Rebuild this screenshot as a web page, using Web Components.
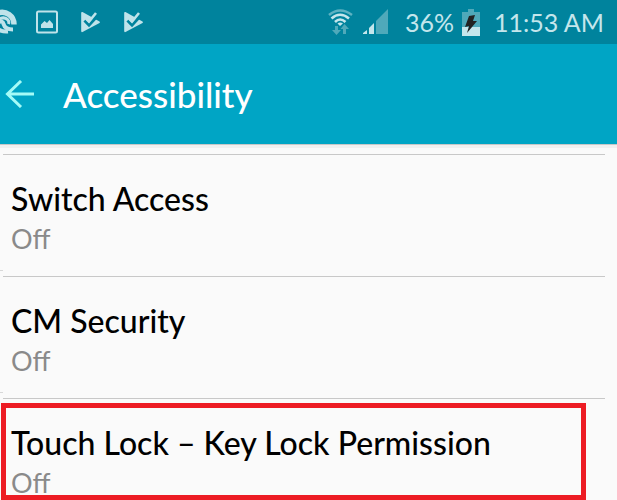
<!DOCTYPE html>
<html lang="en">
<head>
<meta charset="UTF-8">
<meta name="viewport" content="width=device-width, initial-scale=1">
<title>Accessibility</title>
<style>
  body {
    margin: 0;
    background: #fafafa;
    font-family: Lato, "Open Sans", sans-serif;
    overflow: hidden;
  }
</style>
</head>
<body>
<status-bar battery="36%" time="11:53 AM"></status-bar>
<app-header>Accessibility</app-header>
<settings-list>
  <settings-item state="Off">Switch Access</settings-item>
  <settings-item state="Off">CM Security</settings-item>
  <settings-item state="Off" marked>Touch Lock – Key Lock Permission</settings-item>
</settings-list>

<script>
class StatusBar extends HTMLElement {
  connectedCallback() {
    const playCheck = `
      <svg width="20" height="22" viewBox="0 0 20 22">
        <path d="M1.500 1L18.500 10.500Q19.500 11.200 18.500 12L1.500 21Q.2 21.500 .2 20V2Q.2 .5 1.500 1Z" fill="#bfe3ea"/>
        <path d="M9 8.500L13 3.500L18 0L20 2V9L15.500 8Z" fill="#00839d"/>
        <path d="M3.500 9.500L8 14L15.500 6" fill="none" stroke="#00839d" stroke-width="3"/>
        <path d="M5 7.500L8 10.500L15 2" fill="none" stroke="#bfe3ea" stroke-width="2.600"/>
      </svg>`;
    this.attachShadow({ mode: 'open' });
    this.shadowRoot.innerHTML = `
      <style>
        :host {
          display: flex;
          justify-content: space-between;
          height: 44px;
          background: #00839d;
          color: #c4e6ec;
          font-size: 25px;
          line-height: 44px;
          white-space: nowrap;
        }
        .group {
          display: flex;
          align-items: center;
        }
        .left {
          gap: 23px;
        }
        .left svg:first-child {
          margin-right: -4px;
        }
        .right {
          padding-right: 13px;
        }
        .wifi {
          margin-right: 10px;
        }
        .signal {
          margin-right: 17px;
        }
        .battery {
          margin: 0 14px 0 8px;
        }
        svg {
          display: block;
          flex: none;
        }
      </style>
      <div class="group left">
        <svg width="17" height="26" viewBox="0 0 17 26">
          <g fill="none" stroke="#bfe3ea">
            <path d="M-2 4Q4 2 9 5.500Q14 9 14 15.500" stroke-width="5.500"/>
            <path d="M-1 10Q4 7.500 7.500 10.500Q9.500 12.500 8.500 15" stroke-width="3"/>
            <path d="M-2 13.500Q3 11 3.500 15Q5 20.500 13 20.500" stroke-width="4"/>
            <path d="M-2 20Q2 23 8 22.500" stroke-width="4"/>
          </g>
        </svg>
        <svg width="22" height="24" viewBox="0 0 22 24">
          <rect x="1" y="1.500" width="20" height="21" rx="1.500" fill="none" stroke="#bfe3ea" stroke-width="2"/>
          <path d="M5 18V14.500L8.500 11L11 13L13.500 10L17 14V18Z" fill="#bfe3ea"/>
        </svg>
        ${playCheck}
        ${playCheck}
      </div>
      <div class="group right">
        <svg class="wifi" width="25" height="26" viewBox="0 0 25 26">
          <g fill="none" stroke="#c4e6ec" stroke-width="2.600">
            <path d="M1 6Q12-3 24 6" stroke="#5db2c2"/>
            <path d="M3.500 9.500Q12 2 21 9.500"/>
            <path d="M7 13Q12 8 17.500 13"/>
          </g>
          <path d="M9.500 14.500Q12 12.500 15 14.500L12 17Z" fill="#c4e6ec"/>
          <path d="M7 17H10V21H13L8.500 26L4 21H7ZM15 25V20H12.500L16.500 15L21 20H18V25Z" fill="#4fa9ba"/>
        </svg>
        <svg class="signal" width="25" height="26" viewBox="0 0 25 26">
          <path d="M13 12L25 0V25H13Z" fill="#4fa9ba"/>
          <path d="M0 25V24L4 21V25ZM6 25V19L7 18H9V25Z" fill="#c4e6ec"/>
          <path d="M7 25V18L11 14V25Z" fill="#c4e6ec"/>
          <path d="M5.500 19V25" stroke="#00839d"/>
        </svg>
        <span>${this.getAttribute('battery')}</span>
        <svg class="battery" width="18" height="27" viewBox="0 0 18 27">
          <path d="M0 3H6V0H12V3H18V27H0Z" fill="#4fa9ba"/>
          <path d="M0 18H18V27H0Z" fill="#c4e6ec"/>
          <path d="M7 7L13 6L11 12L15 12L5 24L7 17L3 18Z" fill="#222"/>
        </svg>
        <span>${this.getAttribute('time')}</span>
      </div>
    `;
  }
}
customElements.define('status-bar', StatusBar);

class AppHeader extends HTMLElement {
  connectedCallback() {
    this.attachShadow({ mode: 'open' });
    this.shadowRoot.innerHTML = `
      <style>
        :host {
          display: flex;
          align-items: center;
          gap: 28px;
          height: 100px;
          padding-left: 5px;
          background: #00a5c5;
          box-shadow: 0 1px #c8c8c8, 0 4px #f0f0f0;
        }
        button {
          padding: 0;
          border: 0;
          background: none;
          color: #a4fbf7;
        }
        svg {
          display: block;
        }
        h1 {
          margin: 0;
          color: white;
          font-size: 35px;
          font-weight: 500;
          line-height: 40px;
        }
      </style>
      <button aria-label="Back">
        <svg width="30" height="28" viewBox="0 0 30 28" fill="none" stroke="currentColor" stroke-width="3">
          <path d="M16 1L2.500 14L16 27M2.500 14H29"/>
        </svg>
      </button>
      <h1><slot></slot></h1>
    `;
  }
}
customElements.define('app-header', AppHeader);

class SettingsList extends HTMLElement {
  connectedCallback() {
    this.attachShadow({ mode: 'open' });
    this.shadowRoot.innerHTML = `
      <style>
        :host {
          display: block;
          padding: 10px 12px 0 3px;
        }
      </style>
      <slot></slot>
    `;
  }
}
customElements.define('settings-list', SettingsList);

class SettingsItem extends HTMLElement {
  connectedCallback() {
    this.attachShadow({ mode: 'open' });
    this.shadowRoot.innerHTML = `
      <style>
        :host {
          display: block;
          position: relative;
          border-top: 1px solid #c8c8c8;
        }
        button {
          display: block;
          width: 100%;
          padding: 24px 8px 17px;
          border: 0;
          background: none;
          font: inherit;
          text-align: left;
        }
        .title,
        .state {
          display: block;
          line-height: 40px;
        }
        .title {
          color: #000;
          font-size: 32px;
          font-weight: 500;
        }
        .state {
          color: #8a8a8a;
          font-size: 27px;
        }
        /* stub of the divider in the left gutter */
        :host(:not([marked]))::after {
          content: "";
          position: absolute;
          left: -3px;
          bottom: 5px;
          width: 3px;
          height: 1px;
          background: #d8d8d8;
        }
        :host([marked]) button {
          padding-bottom: 0;
        }
        .frame {
          display: none;
        }
        :host([marked]) .frame {
          display: block;
          position: absolute;
          box-sizing: border-box;
          inset: 4px 19px auto -2px;
          height: 97px;
          border: 5px solid #ed1c24;
          pointer-events: none;
        }
      </style>
      <button>
        <span class="title"><slot></slot></span>
        <span class="state">${this.getAttribute('state')}</span>
      </button>
      <div class="frame"></div>
    `;
  }
}
customElements.define('settings-item', SettingsItem);
</script>
</body>
</html>
